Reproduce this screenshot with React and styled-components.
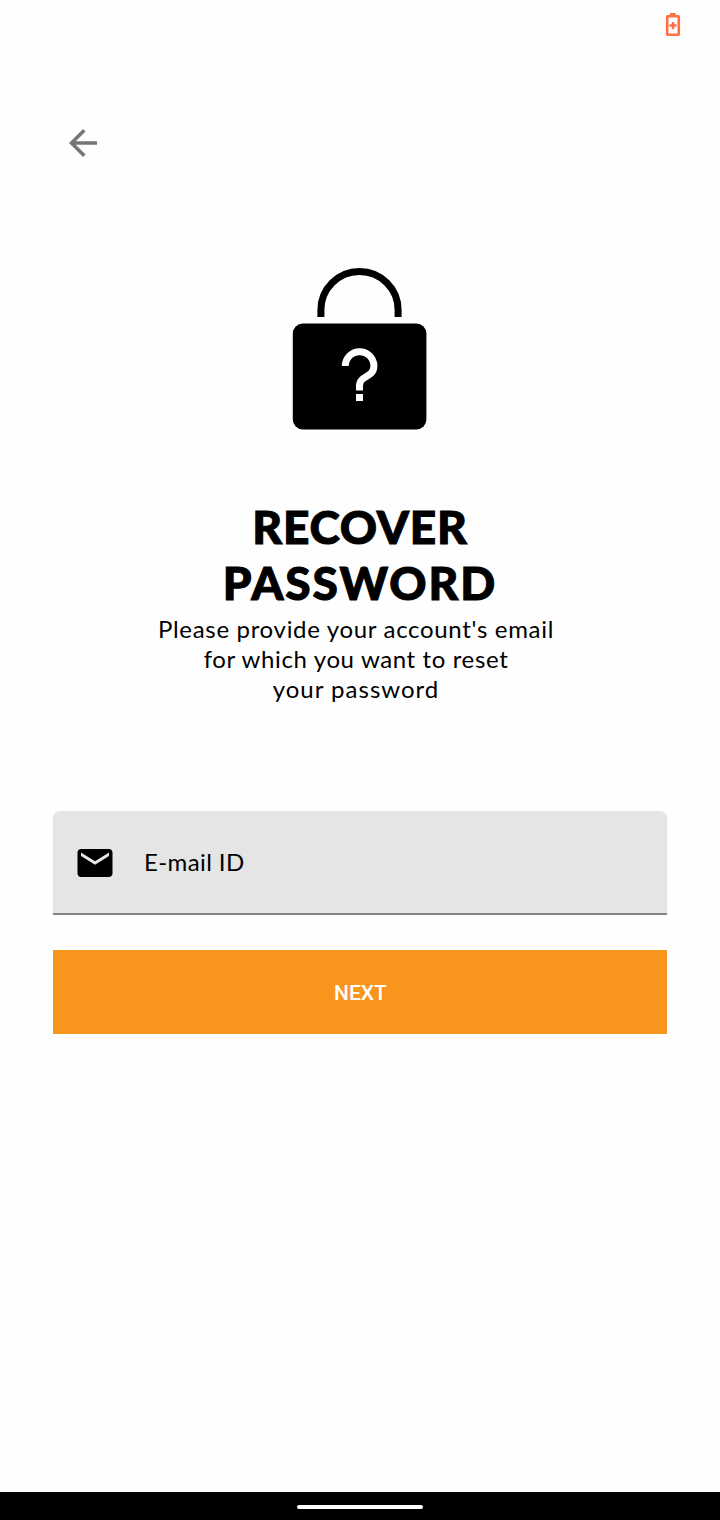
import React from 'react';
import styled, { createGlobalStyle } from 'styled-components';

const GlobalStyle = createGlobalStyle`
  * { box-sizing: border-box; }
  body { margin: 0; background: #fefefe; }
`;

const Screen = styled.div`
  display: flex;
  flex-direction: column;
  width: 720px;
  height: 1520px;
  background: #fefefe;
  color: #000;
  font-family: Lato, "Open Sans", sans-serif;
`;

const StatusBar = styled.div`
  display: flex;
  justify-content: flex-end;
  height: 48px;
  padding: 12px 39px 0 0;
`;

const TopBar = styled.header`
  height: 124px;
  padding: 78px 0 0 67px;
`;

const BackButton = styled.button`
  display: block;
  width: 32px;
  height: 34px;
  padding: 0;
  border: 0;
  background: none;
`;

const Main = styled.main`
  display: flex;
  flex-direction: column;
  flex: 1;
  padding: 92px 53px 0;
`;

const LockIcon = styled.svg`
  display: block;
  align-self: center;
  width: 140px;
  height: 170px;
`;

const Title = styled.h1`
  margin: 65px 0 0;
  text-align: center;
  font-size: 46px;
  font-weight: 900;
  line-height: 56px;
  -webkit-text-stroke: 1px #000;
`;

const Description = styled.p`
  margin: 3px 8px 0 0;
  text-align: center;
  font-size: 24px;
  line-height: 30px;
`;

const Line = styled.span`
  display: block;
  letter-spacing: ${({ $tracking }) => $tracking || 0}px;
`;

const Field = styled.label`
  display: flex;
  align-items: center;
  height: 104px;
  margin-top: 107px;
  padding-left: 21px;
  border-bottom: 2px solid #838383;
  border-radius: 7px 7px 0 0;
  background: #e5e5e5;
`;

const MailIcon = styled.svg`
  width: 42px;
  height: 42px;
  margin-top: 2px;
`;

const FieldLabel = styled.span`
  margin-left: 28px;
  font-size: 24px;
  line-height: 30px;
  letter-spacing: 0.4px;
`;

const NextButton = styled.button`
  height: 84px;
  margin-top: 35px;
  padding: 2px 0 0 1px;
  border: 0;
  background: #f8951d;
  color: #fff;
  font: 500 21px Roboto, sans-serif;
`;

const NavBar = styled.footer`
  display: flex;
  justify-content: center;
  align-items: center;
  height: 28px;
  padding-top: 2px;
  background: #000;
`;

const Handle = styled.div`
  width: 126px;
  height: 4px;
  border-radius: 2px;
  background: #fff;
`;

export default function App() {
  return (
    <>
      <GlobalStyle />
      <Screen>
        <StatusBar>
          <svg width="16" height="25" viewBox="0 0 16 25" fill="none">
            <path d="M5 1h5.6v3H5z" fill="#ff7046" />
            <rect x="2.2" y="4.2" width="11.6" height="18.6" rx=".5" stroke="#ff7046" strokeWidth="2.6" />
            <path d="M4.4 13.6h7.2M8 10v7.2" stroke="#ff7046" strokeWidth="2.5" />
          </svg>
        </StatusBar>
        <TopBar>
          <BackButton aria-label="Back">
            <svg width="32" height="34" viewBox="0 0 32 34" fill="none" stroke="#757575" strokeWidth="3.5">
              <path d="M30 17H5M17.3 4.3L4.5 17l12.8 12.7" />
            </svg>
          </BackButton>
        </TopBar>
        <Main>
          <LockIcon viewBox="290 264 140 170" fill="none">
            <path d="M320.9 317v-7a38.6 38.6 0 0 1 77.2 0v7" stroke="#000" strokeWidth="7" />
            <rect x="292.8" y="323.6" width="133.6" height="105.8" rx="10" fill="#000" />
            <path d="M345.3 366a14.3 14.3 0 0 1 28.6 0C373.9 378 359.5 375 359.5 386v4.6" stroke="#fff" strokeWidth="7" />
            <path d="M356 394h7v7h-7z" fill="#fff" />
          </LockIcon>
          <Title>
            <Line $tracking={0.8}>RECOVER</Line>
            <Line $tracking={1.9}>PASSWORD</Line>
          </Title>
          <Description>
            <Line $tracking={0.68}>Please provide your account's email</Line>
            <Line $tracking={0.62}>for which you want to reset</Line>
            <Line $tracking={1}>your password</Line>
          </Description>
          <Field>
            <MailIcon viewBox="0 0 24 24">
              <path d="M20 4H4c-1.1 0-2 .9-2 2v12c0 1.1.9 2 2 2h16c1.1 0 2-.9 2-2V6c0-1.1-.9-2-2-2zm0 4l-8 5-8-5V6l8 5 8-5v2z" />
            </MailIcon>
            <FieldLabel>E-mail ID</FieldLabel>
          </Field>
          <NextButton>NEXT</NextButton>
        </Main>
        <NavBar>
          <Handle />
        </NavBar>
      </Screen>
    </>
  );
}
